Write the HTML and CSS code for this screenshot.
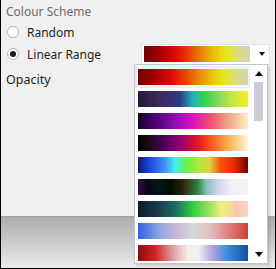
FILE: index.html
```html
<!DOCTYPE html>
<html>
<head>
<meta charset="utf-8">
<link rel="stylesheet" href="styles.css">
</head>
<body>
<div class="frame">
  <div class="content">
    <div class="group-title">Colour Scheme</div>
    <div class="radio-row">
      <span class="radio"></span><span class="radio-label">Random</span>
    </div>
    <div class="radio-row">
      <span class="radio checked"></span><span class="radio-label">Linear Range</span>
      <div class="combo">
        <span class="swatch g1"></span>
        <span class="arrow-down"></span>
      </div>
    </div>
    <div class="field-label">Opacity</div>
  </div>
  <div class="footer"></div>

  <div class="popup">
    <div class="list">
      <div class="item selected"><span class="swatch g1"></span></div>
      <div class="item"><span class="swatch g2"></span></div>
      <div class="item"><span class="swatch g3"></span></div>
      <div class="item"><span class="swatch g4"></span></div>
      <div class="item"><span class="swatch g5"></span></div>
      <div class="item"><span class="swatch g6"></span></div>
      <div class="item"><span class="swatch g7"></span></div>
      <div class="item"><span class="swatch g8"></span></div>
      <div class="item"><span class="swatch g9"></span></div>
    </div>
    <div class="scrollbar">
      <span class="sb-up"></span>
      <span class="sb-thumb"></span>
      <span class="sb-fill"></span>
      <span class="sb-down"></span>
    </div>
  </div>
</div>
</body>
</html>
```

FILE: styles.css
```css
html, body {
  margin: 0;
  padding: 0;
  background: #f0f0f0;
}
.frame {
  position: relative;
  width: 276px;
  height: 269px;
  box-sizing: border-box;
  border-left: 1px solid #000;
  border-right: 1px solid #000;
  border-bottom: 1px solid #000;
  background: #f0f0f0;
  display: flex;
  flex-direction: column;
  font-family: "Noto Sans", "Open Sans", sans-serif;
  font-size: 12px;
  color: #1e1e1e;
  overflow: hidden;
}
.content {
  flex: 1;
  padding: 3px 0 0 5px;
  display: flex;
  flex-direction: column;
}
.group-title {
  color: #6d6d6d;
  height: 18px;
  line-height: 18px;
}
.radio-row {
  display: flex;
  align-items: center;
  height: 22px;
  padding-left: 1px;
}
.radio {
  width: 12px;
  height: 12px;
  box-sizing: border-box;
  border: 1px solid #b4b4b4;
  border-radius: 50%;
  background: #fff;
  display: flex;
  align-items: center;
  justify-content: center;
}
.radio.checked::after {
  content: "";
  width: 6px;
  height: 6px;
  border-radius: 50%;
  background: #1b1b1b;
}
.radio-label {
  margin-left: 8px;
}
.combo {
  margin-left: auto;
  margin-right: 5px;
  width: 129px;
  height: 21px;
  box-sizing: border-box;
  border: 1px solid #d3e6f5;
  background: #fff;
  display: flex;
  align-items: center;
  padding-left: 2px;
}
.combo .swatch {
  width: 106px;
}
.arrow-down {
  margin-left: 9px;
  width: 0;
  height: 0;
  border-left: 3.5px solid transparent;
  border-right: 3.5px solid transparent;
  border-top: 4px solid #111;
}
.field-label {
  margin-top: 6px;
  height: 18px;
  line-height: 18px;
  font-size: 12.5px;
}
.footer {
  height: 52px;
  box-sizing: border-box;
  border-top: 1px solid #a2a2a2;
  background: linear-gradient(to bottom, #adadad 0%, #c8c8c8 45%, #ebebeb 100%);
}
.swatch {
  display: block;
  width: 110px;
  height: 16px;
}
.popup {
  position: absolute;
  left: 133px;
  top: 64px;
  width: 134px;
  height: 200px;
  box-sizing: border-box;
  border: 1px solid #c5c5ce;
  background: #fff;
  box-shadow: 2px 2px 2px rgba(0, 0, 0, 0.12);
  display: flex;
  overflow: hidden;
}
.list {
  width: 115px;
  padding-top: 1px;
}
.item {
  height: 22px;
  box-sizing: border-box;
  padding: 3px 0 0 3px;
}
.item.selected {
  background: #eef6fb;
  border: 1px solid #e1eff9;
  padding: 2px 0 0 2px;
  height: 22px;
  margin-top: 0;
}
.scrollbar {
  flex: 1;
  display: flex;
  flex-direction: column;
  align-items: center;
  padding-top: 6px;
}
.sb-up {
  width: 0;
  height: 0;
  border-left: 4.5px solid transparent;
  border-right: 4.5px solid transparent;
  border-bottom: 5px solid #111;
}
.sb-thumb {
  margin-top: 6px;
  width: 9px;
  height: 39px;
  background: #cdcdd8;
}
.sb-fill {
  flex: 1;
}
.sb-down {
  margin-bottom: 6px;
  width: 0;
  height: 0;
  border-left: 4.5px solid transparent;
  border-right: 4.5px solid transparent;
  border-top: 5px solid #111;
}
.g1 { background: linear-gradient(to right, #760000 0%, #a00000 14%, #e00808 30%, #e64a00 44%, #e8980a 58%, #e8d810 72%, #e4e430 80%, #dcdc80 88%, #d4d4b4 100%); }
.g2 { background: linear-gradient(to right, #28183a 0%, #3e2c5c 20%, #2c3a86 38%, #22b4b6 50%, #30d44c 60%, #8ed85c 74%, #c8e640 86%, #f2ee22 100%); }
.g3 { background: linear-gradient(to right, #180030 0%, #4c0070 15%, #9010b0 34%, #e010c0 50%, #f05070 66%, #f0a484 82%, #f8f2c4 100%); }
.g4 { background: linear-gradient(to right, #000000 0%, #200818 10%, #500060 25%, #a00070 40%, #e81818 55%, #f86020 68%, #f8b050 82%, #fff8d8 100%); }
.g5 { background: linear-gradient(to right, #101870 0%, #1844e0 10%, #4090f0 24%, #40f4f0 34%, #70f040 44%, #b0e840 55%, #e0d040 65%, #f85010 75%, #ec3000 86%, #700000 100%); }
.g6 { background: linear-gradient(to right, #341044 0%, #080818 8%, #001818 20%, #001000 30%, #302008 40%, #308040 54%, #80c0b8 62%, #d0d0e8 72%, #f4f0f8 85%, #f4f4f4 100%); }
.g7 { background: linear-gradient(to right, #101828 0%, #184050 20%, #207060 35%, #30d040 50%, #a0e060 65%, #f0ee80 76%, #f8c8b0 90%, #f8d4d0 100%); }
.g8 { background: linear-gradient(to right, #3060e0 0%, #90a8e0 20%, #c8b8d8 35%, #d8d8d8 50%, #e0c0c0 65%, #e08080 82%, #d04030 100%); }
.g9 { background: linear-gradient(to right, #8a1010 0%, #d02020 15%, #e09090 30%, #f0f0f0 45%, #f0f0f0 55%, #b0a0e0 68%, #4090e0 80%, #1050a0 100%); }
```
